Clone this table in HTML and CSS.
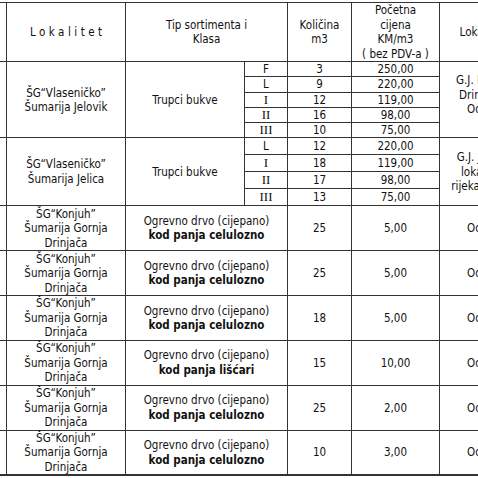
FILE: index.html
```html
<!DOCTYPE html>
<html>
<head>
	<meta charset="utf-8">
	<title>Javna prodaja drvnih sortimenata</title>
	<link rel="stylesheet" href="styles.css">
</head>
<body>
	<table class="ponuda">
		<colgroup>
			<col class="c-rb">
			<col class="c-lok">
			<col class="c-tip">
			<col class="c-kl">
			<col class="c-kol">
			<col class="c-cij">
			<col class="c-mj">
		</colgroup>
		<thead>
			<tr class="r-head">
				<th></th>
				<th class="low"><span class="razmak">Lokalitet</span></th>
				<th colspan="2">Tip sortimenta i<br>Klasa</th>
				<th class="low">Količina<br>m3</th>
				<th>Početna<br>cijena<br>KM/m3<br>( bez PDV-a )</th>
				<th class="low mj">Lokacija</th>
			</tr>
		</thead>
		<tbody>
			<!-- Jelovik -->
			<tr class="r-g1">
				<td rowspan="5"></td>
				<td rowspan="5">ŠG“Vlaseničko”<br>Šumarija Jelovik</td>
				<td rowspan="5">Trupci bukve</td>
				<td>F</td><td>3</td><td>250,00</td>
				<td rowspan="5" class="mj mj-g1">G.J. Drina<br>Drinjača<br>Odjel</td>
			</tr>
			<tr class="r-g1"><td>L</td><td>9</td><td>220,00</td></tr>
			<tr class="r-g1"><td class="rim">I</td><td>12</td><td>119,00</td></tr>
			<tr class="r-g1"><td class="rim">II</td><td>16</td><td>98,00</td></tr>
			<tr class="r-g1"><td class="rim">III</td><td>10</td><td>75,00</td></tr>

			<!-- Jelica -->
			<tr class="r-g2">
				<td rowspan="4"></td>
				<td rowspan="4">ŠG“Vlaseničko”<br>Šumarija Jelica</td>
				<td rowspan="4">Trupci bukve</td>
				<td>L</td><td>12</td><td>220,00</td>
				<td rowspan="4" class="mj mj-g2">G.J. Jadar<br>lokacija<br>rijeka Jadar</td>
			</tr>
			<tr class="r-g2"><td class="rim">I</td><td>18</td><td>119,00</td></tr>
			<tr class="r-g2"><td class="rim">II</td><td>17</td><td>98,00</td></tr>
			<tr class="r-g2"><td class="rim">III</td><td>13</td><td>75,00</td></tr>

			<!-- Gornja Drinjaca -->
			<tr class="r-k">
				<td></td>
				<td>ŠG“Konjuh”<br>Šumarija Gornja<br>Drinjača</td>
				<td colspan="2">Ogrevno drvo (cijepano)<br><b>kod panja celulozno</b></td>
				<td>25</td><td>5,00</td><td class="mj">Odjel</td>
			</tr>
			<tr class="r-k">
				<td></td>
				<td>ŠG“Konjuh”<br>Šumarija Gornja<br>Drinjača</td>
				<td colspan="2">Ogrevno drvo (cijepano)<br><b>kod panja celulozno</b></td>
				<td>25</td><td>5,00</td><td class="mj">Odjel</td>
			</tr>
			<tr class="r-k2">
				<td></td>
				<td>ŠG“Konjuh”<br>Šumarija Gornja<br>Drinjača</td>
				<td colspan="2">Ogrevno drvo (cijepano)<br><b>kod panja celulozno</b></td>
				<td>18</td><td>5,00</td><td class="mj">Odjel</td>
			</tr>
			<tr class="r-k">
				<td></td>
				<td>ŠG“Konjuh”<br>Šumarija Gornja<br>Drinjača</td>
				<td colspan="2">Ogrevno drvo (cijepano)<br><b>kod panja lišćari</b></td>
				<td>15</td><td>10,00</td><td class="mj">Odjel</td>
			</tr>
			<tr class="r-k">
				<td></td>
				<td>ŠG“Konjuh”<br>Šumarija Gornja<br>Drinjača</td>
				<td colspan="2">Ogrevno drvo (cijepano)<br><b>kod panja celulozno</b></td>
				<td>25</td><td>2,00</td><td class="mj">Odjel</td>
			</tr>
			<tr class="r-k last">
				<td></td>
				<td>ŠG“Konjuh”<br>Šumarija Gornja<br>Drinjača</td>
				<td colspan="2">Ogrevno drvo (cijepano)<br><b>kod panja celulozno</b></td>
				<td>10</td><td>3,00</td><td class="mj">Odjel</td>
			</tr>
		</tbody>
	</table>
</body>
</html>
```

FILE: styles.css
```css
/* Tabela ponude */

body { margin: 0; overflow: hidden; background: #fff; color: #111; font-family: "DejaVu Sans Condensed", "DejaVu Sans", sans-serif; font-stretch: condensed; font-size: 11.5px; }

.ponuda { width: 575px; border-collapse: collapse; table-layout: fixed; margin: 2px 0 0 -54px; line-height: 14.5px; }
.ponuda th, .ponuda td { border: 1px solid #333; padding: 0; text-align: center; vertical-align: middle; font-weight: normal; white-space: nowrap; }
.ponuda b { font-weight: bold; }

.c-rb { width: 60px; }
.c-lok { width: 119px; }
.c-tip { width: 119px; }
.c-kl { width: 43px; }
.c-kol { width: 64px; }
.c-cij { width: 88px; }
.c-mj { width: 82px; }

.r-head { height: 58.5px; }
.r-g1 { height: 15.3px; }
.r-g1 td { line-height: 14px; }
.r-g2 { height: 17px; }
.r-k { height: 45px; }
.r-k2 { height: 44px; }
.last td { border-bottom-width: 2px; }

.low { padding-top: 17px; }
.razmak { letter-spacing: 3.5px; margin-right: -3.5px; }
.rim { font-family: "Liberation Serif", serif; font-size: 13px; }
.r-g1 .mj-g1 { line-height: 14.5px; padding-bottom: 9px; }
.mj-g2 { padding-bottom: 14px; }
```
